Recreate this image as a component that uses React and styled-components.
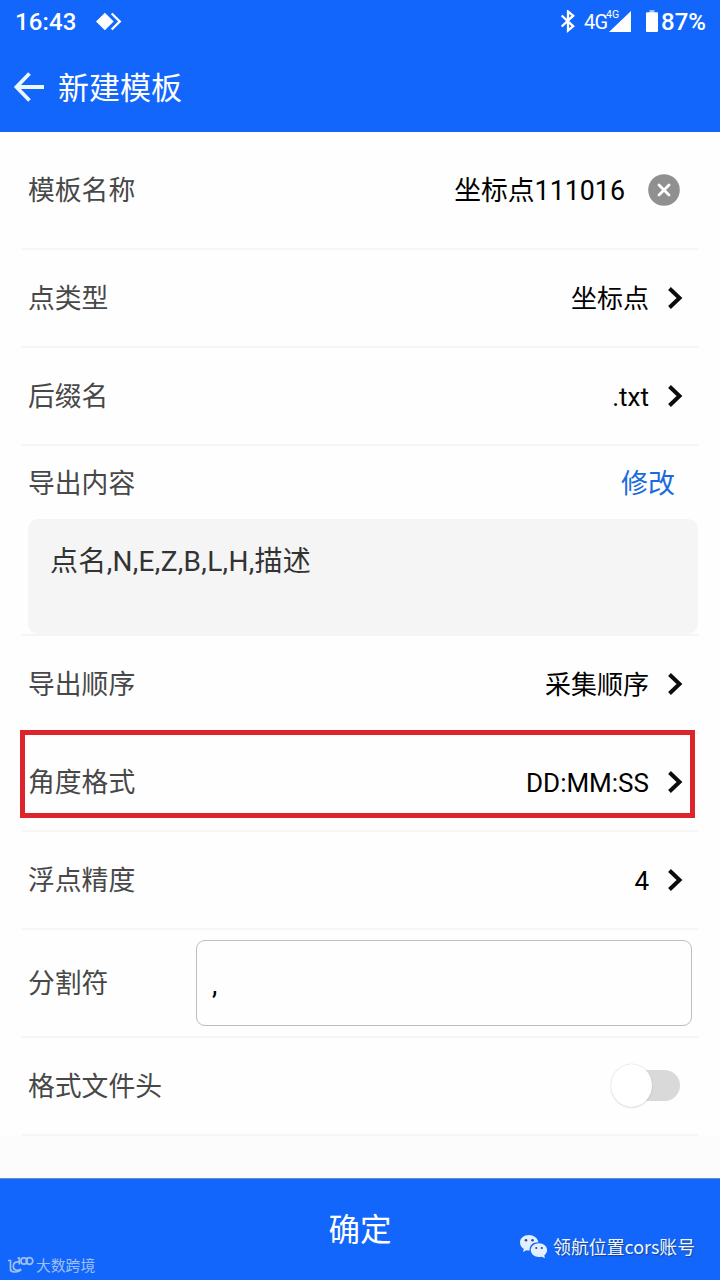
import React from 'react';
import styled, { createGlobalStyle } from 'styled-components';

const GlobalStyle = createGlobalStyle`
  *, *::before, *::after { box-sizing: border-box; }
  body { margin: 0; background: #fcfcfc; }
`;

const Screen = styled.div`
  width: 720px;
  height: 1280px;
  display: flex;
  flex-direction: column;
  overflow: hidden;
  background: #fcfcfc;
  color: #000;
  font-family: Roboto, 'Noto Sans CJK SC', sans-serif;
`;

const Header = styled.header`
  height: 132px;
  flex: none;
  background: #1266fb;
  color: #fff;
`;

const StatusBar = styled.div`
  height: 44px;
  padding: 0 14px 0 15px;
  display: flex;
  align-items: center;
  justify-content: space-between;
  font-size: 24px;
  font-weight: 500;
  line-height: 46px;
`;

const StatusGroup = styled.div`
  display: flex;
  align-items: center;
  height: 44px;
`;

const Clock = styled.span`
  margin-right: 20px;
  letter-spacing: 0.1px;
`;

const Network = styled.span`
  width: 23px;
  margin-left: 8px;
  font-size: 20px;
  font-weight: 400;
  line-height: 42px;
  letter-spacing: -0.8px;
`;

const NetworkSup = styled.span`
  margin: -14px -10px 0 -1px;
  font-size: 10.5px;
  font-weight: 400;
  line-height: 12px;
`;

const BatteryGroup = styled.span`
  margin-left: 15px;
  display: flex;
  align-items: center;
  gap: 3px;
`;

const TitleBar = styled.div`
  height: 88px;
  padding: 0 0 2px 13px;
  display: flex;
  align-items: center;
  gap: 13px;
`;

const Title = styled.h1`
  margin: 0;
  padding-top: 4px;
  font-size: 31px;
  font-weight: 400;
  line-height: 44px;
`;

const Form = styled.main`
  flex: none;
  padding: 0 22px;
  background: #fefefe;
`;

const Row = styled.div`
  position: relative;
  height: ${({ $height }) => $height || 98}px;
  padding: 0 ${({ $right }) => $right ?? 15}px 0 6px;
  display: flex;
  align-items: center;
  justify-content: space-between;
  border-bottom: 2px solid #f5f5f5;
`;

const Label = styled.span`
  padding-top: 2px;
  color: #484848;
  font-size: 26.8px;
  line-height: 40px;
`;

const Value = styled.span`
  display: flex;
  align-items: center;
  gap: 18px;
  font-size: 26px;
  line-height: 40px;
`;

const ValueText = styled.span`
  padding-top: 2px;
`;

const NameValue = styled(Value)`
  gap: 23px;
  font-size: 26.8px;
`;

const ExportSection = styled.section`
  height: 190px;
  padding-left: 6px;
  border-bottom: 2px solid #f5f5f5;
`;

const ExportHead = styled.div`
  height: 73px;
  padding-right: 23px;
  display: flex;
  align-items: center;
  justify-content: space-between;
`;

const EditLink = styled.span`
  padding-top: 3px;
  color: #1a6be0;
  font-size: 27px;
  line-height: 40px;
`;

const ExportBox = styled.div`
  height: 115px;
  padding: 23px 22px;
  border-radius: 10px;
  background: #f5f5f5;
  color: #333;
  font-size: 28px;
  letter-spacing: 0.32px;
  line-height: 40px;
`;

const Highlight = styled.div`
  position: absolute;
  top: -4px;
  left: -2px;
  width: 675px;
  height: 88px;
  border: 5px solid #de242b;
  pointer-events: none;
`;

const SeparatorField = styled.div`
  width: 496px;
  height: 86px;
  padding: 4px 15px 0;
  display: flex;
  align-items: center;
  border: 1px solid #bdbdbd;
  border-radius: 9px;
  font-size: 27px;
`;

const Switch = styled.div`
  width: 69px;
  height: 44px;
  display: flex;
  align-items: center;
`;

const Knob = styled.div`
  z-index: 1;
  flex: none;
  width: 41px;
  height: 43px;
  margin-bottom: 1px;
  border-radius: 50%;
  background: #fff;
  box-shadow: 0 0 1px #bbb, 0 1px 2px rgba(0, 0, 0, 0.1);
`;

const Track = styled.div`
  width: 50px;
  height: 31px;
  margin: 0 0 1px -22px;
  border-radius: 0 16px 16px 0;
  background: #d9d9d9;
`;

const Footer = styled.footer`
  position: relative;
  height: 102px;
  margin-top: auto;
  flex: none;
  display: flex;
  align-items: center;
  justify-content: center;
  border-top: 1px solid #6290cf;
  background: #1266fb;
  color: #fff;
`;

const Confirm = styled.span`
  padding-top: 2px;
  font-size: 31.5px;
  line-height: 44px;
`;

const SiteMark = styled.div`
  position: absolute;
  left: 7px;
  bottom: 3px;
  display: flex;
  align-items: center;
  gap: 2px;
  color: #a0c0f5;
  font-size: 14.8px;
  line-height: 22px;
`;

const AccountMark = styled.div`
  position: absolute;
  left: 519px;
  bottom: 21px;
  display: flex;
  align-items: center;
  gap: 5px;
  color: #f3f7ff;
  font-family: 'Noto Sans CJK SC', sans-serif;
  font-size: 17.9px;
  line-height: 26px;
  white-space: nowrap;
  text-shadow: 1px 1px 1px #174493;
`;

const Chevron = () => (
  <svg width="16" height="24" viewBox="0 0 16 24" fill="none" stroke="#0c0c0c" strokeWidth="4">
    <path d="M2.500 2.500 12.500 12 2.500 21.500" />
  </svg>
);

const DiamondIcon = () => (
  <svg width="28" height="20" viewBox="0 0 28 20">
    <path d="M0 9.500 8.900.7 17.700 9.500 8.900 18.300Z" fill="#fff" />
    <path d="m15.700 1.500 8 8-8 8" fill="none" stroke="#fff" strokeWidth="2.400" />
  </svg>
);

const BluetoothIcon = () => (
  <svg width="16" height="24" viewBox="0 0 16 24" fill="none" stroke="#fff" strokeWidth="2.300">
    <path d="m1.700 5.500 11.500 10.800L8 20.500V1.500l5.200 4.200L1.700 16.500" />
  </svg>
);

const SignalIcon = () => (
  <svg width="22" height="22" viewBox="0 0 22 22">
    <path d="M22 0v21H0Z" fill="#fff" />
  </svg>
);

const BatteryIcon = () => (
  <svg width="12" height="24" viewBox="0 0 12 24">
    <path d="M3.500 0h5v3h-5Z" fill="#9dc1ff" />
    <path d="M1 2.200h10q1 0 1 1V21q0 1-1 1H1q-1 0-1-1V3.200q0-1 1-1Z" fill="#fff" />
  </svg>
);

const BackIcon = () => (
  <svg width="32" height="32" viewBox="0 0 32 32" fill="none" stroke="#e9f7ff" strokeWidth="3.800">
    <path d="M16.500 2.500 3.500 16l13 13.500M3.500 16H31" />
  </svg>
);

const ClearIcon = () => (
  <svg width="32" height="32" viewBox="0 0 32 32">
    <circle cx="16" cy="16" r="15.800" fill="#909090" />
    <path d="m11 11 10 10M21 11 11 21" stroke="#fff" strokeWidth="2.800" strokeLinecap="round" />
  </svg>
);

const WeChatIcon = () => (
  <svg width="29" height="25" viewBox="0 0 29 25">
    <path d="M10 1C4.800 1 1 4.200 1 8.600c0 2.700 1.500 5 3.800 6.400L4 18l3.500-1.800q1.500.4 3.200.3C10 11.500 14 8 19.500 8.200 18.500 4 14.600 1 10 1Z" fill="#e3eeff" />
    <path d="M20 9.200c-4.700 0-8.200 3-8.200 6.900s3.500 7 8.200 7q1.500 0 2.800-.4l3.200 1.600-.8-2.900c1.800-1.300 2.900-3.200 2.900-5.300 0-3.900-3.500-6.900-8.100-6.900Z" fill="#e3eeff" />
    <g fill="#214d9b">
      <circle cx="7" cy="6.300" r="1.300" />
      <circle cx="13.500" cy="6.300" r="1.300" />
      <circle cx="17.300" cy="14" r="1.100" />
      <circle cx="22.800" cy="14" r="1.100" />
    </g>
  </svg>
);

const SiteIcon = () => (
  <svg width="27" height="20" viewBox="0 0 27 20" fill="none" stroke="#a0c0f5" strokeWidth="1.700">
    <path d="M1 4.500h2.500v10.500M12 6C8 5.500 6.300 7 6.300 10.500c0 4 4.200 5 7.700 2.500" />
    <path d="M3.500 14.500c2.500 2.200 8 2 10.700-.8M10.500 2h1.800v6.500" />
    <circle cx="17" cy="5" r="3.100" />
    <circle cx="22.500" cy="5" r="3.300" />
  </svg>
);

const SelectRow = ({ label, value, highlighted }) => (
  <Row>
    <Label>{label}</Label>
    <Value>
      <ValueText>{value}</ValueText>
      <Chevron />
    </Value>
    {highlighted && <Highlight />}
  </Row>
);

export default function App() {
  return (
    <Screen>
      <GlobalStyle />
      <Header>
        <StatusBar>
          <StatusGroup>
            <Clock>16:43</Clock>
            <DiamondIcon />
          </StatusGroup>
          <StatusGroup>
            <BluetoothIcon />
            <Network>4G</Network>
            <NetworkSup>4G</NetworkSup>
            <SignalIcon />
            <BatteryGroup>
              <BatteryIcon />
              87%
            </BatteryGroup>
          </StatusGroup>
        </StatusBar>
        <TitleBar>
          <BackIcon />
          <Title>新建模板</Title>
        </TitleBar>
      </Header>
      <Form>
        <Row $height={118} $right={18}>
          <Label>模板名称</Label>
          <NameValue>
            <ValueText>坐标点111016</ValueText>
            <ClearIcon />
          </NameValue>
        </Row>
        <SelectRow label="点类型" value="坐标点" />
        <SelectRow label="后缀名" value=".txt" />
        <ExportSection>
          <ExportHead>
            <Label>导出内容</Label>
            <EditLink>修改</EditLink>
          </ExportHead>
          <ExportBox>点名,N,E,Z,B,L,H,描述</ExportBox>
        </ExportSection>
        <SelectRow label="导出顺序" value="采集顺序" />
        <SelectRow label="角度格式" value="DD:MM:SS" highlighted />
        <SelectRow label="浮点精度" value="4" />
        <Row $height={108} $right={6}>
          <Label>分割符</Label>
          <SeparatorField>,</SeparatorField>
        </Row>
        <Row $right={18}>
          <Label>格式文件头</Label>
          <Switch>
            <Knob />
            <Track />
          </Switch>
        </Row>
      </Form>
      <Footer>
        <Confirm>确定</Confirm>
        <SiteMark>
          <SiteIcon />
          大数跨境
        </SiteMark>
        <AccountMark>
          <WeChatIcon />
          领航位置cors账号
        </AccountMark>
      </Footer>
    </Screen>
  );
}
